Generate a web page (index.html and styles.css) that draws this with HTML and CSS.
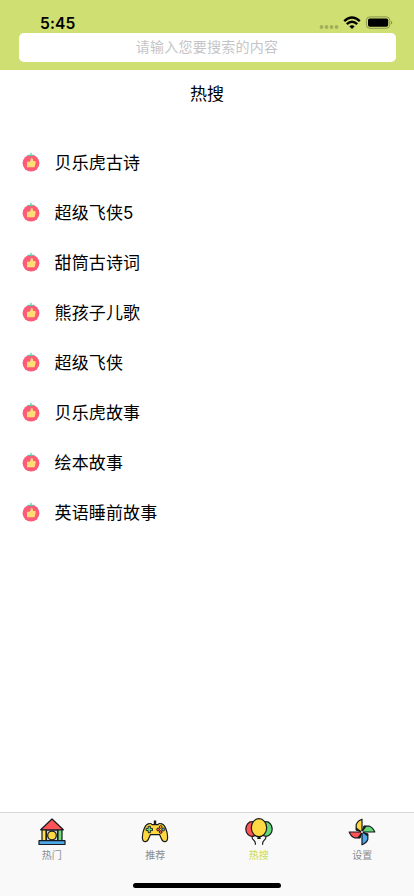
FILE: index.html
```html
<!DOCTYPE html>
<html lang="zh-CN">
<head>
<meta charset="utf-8">
<meta name="viewport" content="width=device-width, initial-scale=1">
<title>热搜</title>
<link rel="stylesheet" href="styles.css">
</head>
<body>
<svg class="defs" width="0" height="0">
  <symbol id="berry" viewBox="0 0 18 20">
    <circle cx="9" cy="11.2" r="8.4" fill="#fd5b78"/>
    <path d="M9 .8V3.500M5.800 3.300Q7.500 2.900 9 3.800Q10.500 2.900 12.200 3.300" fill="none" stroke="#55c8a0" stroke-width="1.100"/>
    <path d="M5 9.800h2.500L8.700 8.200V6.600q2-.8 2.300 1.100V9.100h1.900q1 .2.800 1.200l-.8 4q-.2.900-1 .9H5z" fill="#ffdc74"/>
  </symbol>
</svg>
<div class="screen">
  <header class="header">
    <div class="status">
      <span class="time">5:45</span>
      <svg class="signals" width="76" height="16" viewBox="0 0 76 16">
        <g fill="#a2af5a"><circle cx="3.500" cy="12" r="1.900"/><circle cx="8.500" cy="12" r="1.900"/><circle cx="13.500" cy="12" r="1.900"/><circle cx="18.500" cy="12" r="1.900"/></g>
        <g fill="none" stroke="#000" stroke-width="2.400"><path d="M26.200 6.200Q34 -1.100 41.800 6.200"/><path d="M28.800 9.200Q34 4.500 39.200 9.200"/></g>
        <path d="M31.300 11.300Q34 9.200 36.700 11.300L34 14z"/>
        <rect x="48.400" y="1.900" width="23.400" height="11.400" rx="3.500" fill="none" stroke="#8b9650"/>
        <rect x="50" y="3.500" width="20.200" height="8.200" rx="1.800"/>
        <path d="M73.200 5.500q1.800 2 0 4z" fill="#737e3b"/>
      </svg>
    </div>
    <div class="search">请输入您要搜索的内容</div>
  </header>
  <main class="content">
    <h1 class="title">热搜</h1>
    <ul class="list">
      <li class="row"><svg class="berry"><use href="#berry"/></svg><span>贝乐虎古诗</span></li>
      <li class="row"><svg class="berry"><use href="#berry"/></svg><span>超级飞侠5</span></li>
      <li class="row"><svg class="berry"><use href="#berry"/></svg><span>甜筒古诗词</span></li>
      <li class="row"><svg class="berry"><use href="#berry"/></svg><span>熊孩子儿歌</span></li>
      <li class="row"><svg class="berry"><use href="#berry"/></svg><span>超级飞侠</span></li>
      <li class="row"><svg class="berry"><use href="#berry"/></svg><span>贝乐虎故事</span></li>
      <li class="row"><svg class="berry"><use href="#berry"/></svg><span>绘本故事</span></li>
      <li class="row"><svg class="berry"><use href="#berry"/></svg><span>英语睡前故事</span></li>
    </ul>
  </main>
  <footer class="footer">
    <nav class="tabs">
      <a class="tab">
        <svg class="icon" viewBox="0 0 28 28" stroke="#16191d" stroke-width="1.200" stroke-linejoin="round">
          <path d="M8.300 12h11.400v10.500H8.300z" fill="#cfd4d8"/>
          <rect x="4" y="11" width="4" height="11.500" fill="#ffdf55"/><rect x="20" y="11" width="4" height="11.500" fill="#70de76"/>
          <circle cx="14" cy="17.500" r="4.300" fill="#ffd944"/>
          <path d="M14 1L25.300 11.800H2.700z" fill="#ff5457"/>
          <rect x="1" y="22.700" width="26" height="3.800" fill="#4da8e8"/>
        </svg>
        <span>热门</span>
      </a>
      <a class="tab">
        <svg class="icon" viewBox="0 0 28 28" stroke="#16191d" stroke-width="1.200" stroke-linejoin="round">
          <path d="M14 2.500v5" stroke-width="2.400"/>
          <path d="M8 5.700q2-.7 3 .9h6q1-1.600 3-.9c4 .5 6.500 8 6.600 13.300.1 6-4.400 5.900-6.200 1.800l-1.700-4.100H9.300l-1.700 4.100C5.800 24.900 1.300 25 1.400 19 1.500 13.700 4 6.200 8 5.700z" fill="#ffd83f"/>
          <path d="M7.200 8.300h2.200v2.100h2.100v2.200H9.400v2.100H7.200v-2.100H5.100v-2.200h2.100z" fill="#65e183" stroke-width=".9"/>
          <g stroke-width=".9"><circle cx="19.700" cy="9" r="1.400" fill="#ffb02e"/><circle cx="22.300" cy="11.500" r="1.400" fill="#4da8e8"/><circle cx="17.100" cy="11.500" r="1.400" fill="#ff5457"/><circle cx="19.700" cy="14" r="1.400" fill="#ff5457"/></g>
        </svg>
        <span>推荐</span>
      </a>
      <a class="tab active">
        <svg class="icon" viewBox="0 0 28 28" stroke="#16191d" stroke-width="1.200" stroke-linejoin="round">
          <path d="M7 18.500q0 2.500 1.800 3.700t1.600 4.500M21 18.500q0 2.500-1.800 3.700t-1.600 4.500" fill="none"/>
          <ellipse cx="7" cy="11" rx="6.200" ry="7.400" fill="#ff5457"/>
          <ellipse cx="21" cy="11" rx="6.200" ry="7.400" fill="#65d979"/>
          <path d="M12.700 20.300h2.600L14 18.200z" fill="#ffd944"/>
          <ellipse cx="14" cy="9.700" rx="7.700" ry="9" fill="#ffd944"/>
        </svg>
        <span>热搜</span>
      </a>
      <a class="tab">
        <svg class="icon" viewBox="0 0 28 28" stroke="#16191d" stroke-width="1.200" stroke-linejoin="round">
          <path d="M14 14L8.200 12V6.500Q9.500 3 14 1.200z" fill="#ffd944"/>
          <path d="M14 14L16 8.200h5.500Q25 9.500 26.800 14z" fill="#65d979"/>
          <path d="M14 14L19.800 16v5.500Q18.500 25 14 26.800z" fill="#4da8e8"/>
          <path d="M14 14L12 19.800H6.500Q3 18.500 1.200 14z" fill="#ff5457"/>
          <path d="M14 14L8.200 9.500V12zM14 14L18.500 8.200H16zM14 14L19.800 18.500V16zM14 14L9.500 19.800H12z" fill="#16191d" stroke-width=".4"/>
          <circle cx="14" cy="14" r=".9" fill="#fff" stroke="none"/>
        </svg>
        <span>设置</span>
      </a>
    </nav>
    <div class="home"></div>
  </footer>
</div>
</body>
</html>
```
FILE: styles.css
```css
* { box-sizing: border-box; }
body { margin: 0; background: #fff; color: #000; font-family: Inter, "Noto Sans CJK SC", sans-serif; }
.defs { display: block; height: 0; }
.screen { display: flex; flex-direction: column; height: 896px; width: 414px; }
.header { height: 70px; background: #cfdf72; display: flex; flex-direction: column; padding: 0 18.5px; }
.status { display: flex; justify-content: space-between; height: 32.5px; padding: 15px 2px 0 21.5px; }
.time { font-size: 15.6px; line-height: 18px; font-weight: 600; letter-spacing: .1px; }
.signals { flex: none; }
.search { height: 29.5px; border-radius: 5px; background: #fff; color: #c5c5c8; font-size: 14px; letter-spacing: .25px; line-height: 27px; text-align: center; }
.content { flex: 1; }
.title { margin: 0; padding-top: 12px; height: 68px; font-size: 17px; line-height: 25px; font-weight: 400; text-align: center; }
.list { list-style: none; margin: 0; padding: 0; }
.row { height: 50px; display: flex; align-items: center; padding-left: 21.5px; font-size: 17px; letter-spacing: .15px; }
.row span { padding-bottom: 3px; }
.berry { width: 18px; height: 20px; margin: -2px 15px 0 0; }
.footer { height: 84px; background: #f9f9f9; border-top: 1px solid #d9d9d9; display: flex; flex-direction: column; align-items: center; }
.tabs { display: flex; width: 100%; height: 70px; }
.tab { flex: 1; display: flex; flex-direction: column; align-items: center; padding-top: 5px; color: #8c8c8c; font-size: 10px; line-height: 14px; }
.tab span { margin-top: 2px; }
.icon { width: 28px; height: 28px; }
.active { color: #c6d95b; }
.home { width: 148px; height: 5px; border-radius: 3px; background: #000; }
```
